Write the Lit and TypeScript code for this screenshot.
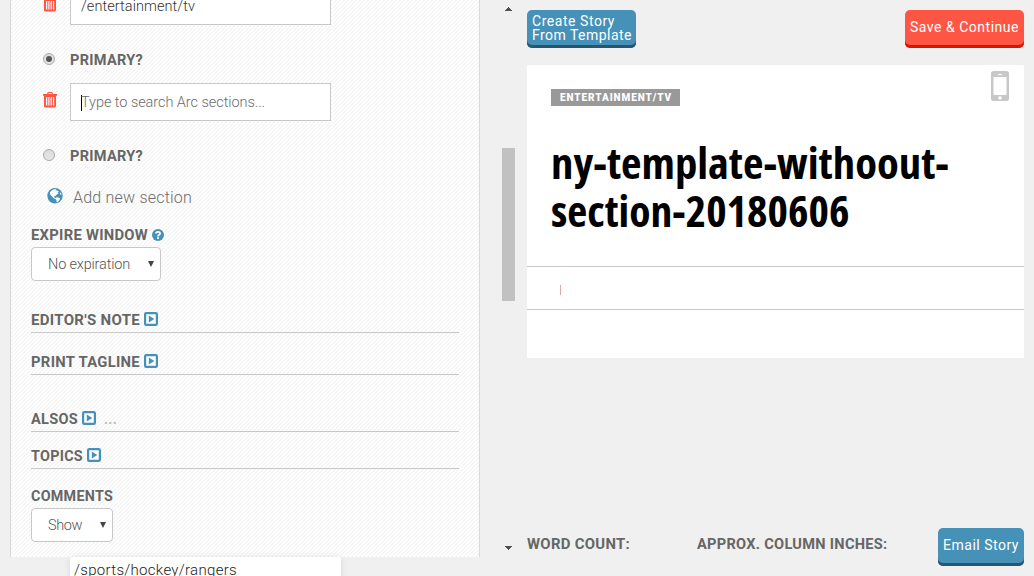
import { LitElement, html, css } from "lit";
import { customElement, property } from "lit/decorators.js";

/** Single line of text set to an exact measure, by tracking or by horizontal scaling. */
@customElement("fit-text")
class FitText extends LitElement {
  @property({ type: Number }) width = 0;
  @property({ type: String }) text = "";
  @property({ type: Boolean }) squeeze = false;
  static styles = css`
    :host { display: inline-block; white-space: nowrap; flex: none; }
    .t { display: inline-block; transform-origin: 0 50%; }
  `;
  updated() {
    const t = this.renderRoot.querySelector(".t") as HTMLElement;
    this.style.width = this.width + "px";
    if (this.squeeze) {
      t.style.transform = `scaleX(${this.width / t.getBoundingClientRect().width})`;
    } else {
      t.style.letterSpacing = "0px";
      t.style.letterSpacing = (this.width - t.getBoundingClientRect().width) / this.text.length + "px";
    }
  }
  render() { return html`<span class="t">${this.text}</span>`; }
}

const trash = html`<svg class="trash" width="14" height="16" viewBox="0 0 14 16">
  <path fill="#ff5544" fill-rule="evenodd" d="M4.800 0h4.400l.8 2H14v1.700h-1V14a1.600 1.600 0 0 1-1.600 1.600H2.600A1.600 1.600 0 0 1 1 14V3.700H0V2h4zM5.500 1L5.100 2h3.800l-.4-1zM3 5v8.500h1.300V5zM5.300 5v8.500h1.200V5zM7.600 5v8.500h1.200V5zM9.900 5v8.500h1.200V5z"/></svg>`;
const globe = html`<svg class="globe" width="16" height="16" viewBox="0 0 16 16">
  <circle cx="8" cy="7.700" r="7.700" fill="#4591b8"/>
  <path fill="#fff" d="M2.900 4.300L4.900 2.200 7.800 1.100l2 .9-.9 1 1.900-.4 1.100 1.100-1.200.9.900 1-1.500.7-1.300 1.500-1.700.5.300 1.200 1.600.7-.5.700-2.200-.9-1.600-2L3 6.200zM8.800 9.600l2.200-.3 2.100 1.200-.7 1.800-2.100 2.100-.8-.2.100-1.900-1-1.100zM12.700 5l1.200-.4.800 1.800-1.100.4z"/></svg>`;
const help = html`<svg class="help" width="12" height="12" viewBox="0 0 12 12">
  <circle cx="6" cy="6" r="6" fill="#4591b8"/>
  <path fill="none" stroke="#fff" stroke-width="1.700" d="M3.900 4.600C3.900 2.300 8.100 2.300 8.100 4.500 8.100 5.800 6 5.700 6 7.400"/><path fill="#fff" d="M5.100 8.300h1.800V10H5.100z"/></svg>`;
const play = html`<svg class="play" width="14" height="14" viewBox="0 0 14 14">
  <rect x="1.100" y="1.100" width="11.800" height="11.800" rx="1.200" fill="#fff" stroke="#4591b8" stroke-width="2.200"/>
  <path fill="#4591b8" d="M4.800 3.500L10.300 7l-5.500 3.500z"/></svg>`;
const phone = html`<svg class="phone" width="18" height="30" viewBox="0 0 18 30">
  <rect width="18" height="30" rx="2.500" fill="#c8c8c8"/><rect x="2.500" y="6" width="13" height="18" fill="#fff"/>
  <rect x="7" y="3" width="4" height="1" fill="#fff"/><circle cx="9" cy="27" r="1.800" fill="#fff"/></svg>`;
const arrow = html`<svg class="arrow" width="6" height="6" viewBox="0 0 6 6"><path fill="#444" d="M0 0h6L3 6z"/></svg>`;

@customElement("app-root")
class AppRoot extends LitElement {
  static styles = css`
    * { box-sizing: border-box; }
    :host { display: flex; position: relative; width: 1034px; height: 576px; overflow: hidden; background: #f0f0f0;
      font-family: Roboto, "Liberation Sans", sans-serif; font-size: 14px; color: #666; }
    svg { display: block; flex: none; }
    .panel { width: 470px; height: 557px; margin-left: 10px; padding: 0 20px; overflow: hidden;
      border: solid #d8d8d8; border-width: 0 1px; flex: none;
      background: linear-gradient(135deg, #f6f6f6 25%, #fff 25% 50%, #f6f6f6 50% 75%, #fff 75%) 0 0 / 4px 4px; }
    .row { display: flex; align-items: center; }
    .entry { padding-left: 12px; height: 38px; }
    .entry.first { height: 25px; align-items: flex-end; }
    .field { width: 261px; height: 38px; margin-left: 13px; padding-left: 10px; border: 1px solid #c8c8c8; background: #fff;
      display: flex; align-items: center; flex: none; font-weight: 300; color: #333; font-size: 14.500px; }
    .first .trash { margin-bottom: 13px; }
    .field.hint { color: #6c6c6c; padding: 1px 0 0 10px; }
    .caret { width: 1px; height: 16px; background: #000; margin-right: -1px; }
    .trash { margin-top: -4px; }
    .primary { height: 20px; padding-left: 12px; }
    .primary .label { padding-top: 1px; }
    .radio { width: 12px; height: 12px; border-radius: 50%; border: 1px solid #aaa; background: linear-gradient(#ddd, #e6e6e6);
      margin-right: 15px; display: grid; place-items: center; }
    .dot { width: 6px; height: 6px; border-radius: 50%; background: #555; }
    .label { font-weight: 700; font-size: 15px; line-height: 20px; letter-spacing: .3px; }
    .gap24 { margin-top: 24px; }
    .add { height: 20px; margin-top: 21px; padding-left: 16px; font-weight: 300; font-size: 16px; color: #6c6c6c; gap: 10px; }
    .add fit-text { padding-top: 2px; }
    .head { height: 20px; gap: 4px; }
    .select { height: 34px; border: 1px solid #c8c8c8; border-radius: 4px; background: #fff; justify-content: space-between;
      padding: 0 6px 0 16px; font-weight: 300; font-size: 14.500px; color: #555; }
    .rule { border-bottom: 1px solid #c8c8c8; height: 23px; align-items: flex-start; gap: 4px; }
    .rule .play { margin-top: 2px; }
    .more { color: #bbb; font-weight: 700; margin-left: 4px; line-height: 20px; }
    .s2 { height: 2px; } .s14 { height: 14px; } .s17 { height: 17px; } .s19 { height: 19px; } .s29 { height: 29px; } .s34 { height: 34px; }
    .menu { position: absolute; left: 70px; top: 557px; width: 271px; height: 40px; background: #fff; padding: 2px 4px;
      border-radius: 2px; box-shadow: 0 0 6px rgba(0,0,0,.1); color: #222; font-weight: 300; font-size: 15px; line-height: 22px; }
    .gutter { width: 13px; margin-left: 22px; display: flex; flex-direction: column; align-items: center; flex: none; }
    .up { margin-top: 7px; }
    .thumb { width: 13px; height: 153px; background: #c1c1c1; margin-top: 137px; }
    .down { margin-top: 245px; }
    .main { width: 497px; margin-left: 12px; padding-top: 10px; display: flex; flex-direction: column; flex: none; }
    .bar { display: flex; justify-content: space-between; }
    .btn { height: 38px; border-radius: 5px; background: #4591b8; box-shadow: inset 0 -3px #28566f; color: #fff;
      padding: 0 5px 3px; display: flex; flex-direction: column; justify-content: center; line-height: 14px; font-size: 14px; flex: none; }
    .btn.save { background: #ff5544; box-shadow: inset 0 -3px #dc1500; }
    .btn.single { padding-bottom: 5px; }
    .btn.create { width: 109px; } .btn.save { width: 119px; } .btn.email { width: 86px; }
    .wide { width: 130px; } .narrow { width: 82px; }
    .story { margin-top: 17px; height: 293px; background: #fff; }
    .top { height: 201px; padding: 6px 15px 0 24px; display: flex; justify-content: space-between; align-items: flex-start; }
    .copy { display: flex; flex-direction: column; align-items: flex-start; }
    .badge { margin-top: 18px; height: 17px; width: 129px; padding-left: 9px; background: #999; color: #fff; font-weight: 900;
      font-size: 10px; line-height: 17px; }
    .title { margin-top: 33px; color: #000; font: 700 43px/48px "Open Sans", sans-serif; font-stretch: 75%; display: flex; flex-direction: column; }
    .strip { height: 44px; border: solid #c8c8c8; border-width: 1px 0; padding: 18px 0 0 33px; }
    .mark { width: 1px; height: 10px; background: #dba8a8; }
    .foot { margin-top: 170px; display: flex; }
    .count { margin: 6px 0 0; width: 170px; }
    .inches { margin: 6px 0 0; width: 241px; }
  `;
  section(name: string, w: number, extra: unknown = "") {
    return html`<div class="row rule"><fit-text squeeze class="label" .width=${w} .text=${name}></fit-text>${play}${extra}</div>`;
  }
  render() {
    return html`
      <div class="panel">
        <div class="row entry first">${trash}<div class="field"><fit-text .width=${114} .text=${"/entertainment/tv"}></fit-text></div></div>
        <div class="row primary gap24"><div class="radio"><div class="dot"></div></div><fit-text squeeze class="label" .width=${73} .text=${"PRIMARY?"}></fit-text></div>
        <div class="s14"></div>
        <div class="row entry">${trash}<div class="field hint"><div class="caret"></div><fit-text .width=${184} .text=${"Type to search Arc sections..."}></fit-text></div></div>
        <div class="row primary gap24"><div class="radio"></div><fit-text squeeze class="label" .width=${73} .text=${"PRIMARY?"}></fit-text></div>
        <div class="row add">${globe}<fit-text .width=${119} .text=${"Add new section"}></fit-text></div>
        <div class="s19"></div>
        <div class="row head"><fit-text squeeze class="label" .width=${117} .text=${"EXPIRE WINDOW"}></fit-text>${help}</div>
        <div class="s2"></div>
        <div class="row select wide"><fit-text .width=${82} .text=${"No expiration"}></fit-text>${arrow}</div>
        <div class="s29"></div>
        ${this.section("EDITOR'S NOTE", 109)}
        <div class="s19"></div>
        ${this.section("PRINT TAGLINE", 109)}
        <div class="s34"></div>
        ${this.section("ALSOS", 47, html`<div class="more"><fit-text .width=${13} .text=${"..."}></fit-text></div>`)}
        <div class="s14"></div>
        ${this.section("TOPICS", 52)}
        <div class="s17"></div>
        <div class="row head"><fit-text squeeze class="label" .width=${82} .text=${"COMMENTS"}></fit-text></div>
        <div class="s2"></div>
        <div class="row select narrow"><fit-text .width=${34} .text=${"Show"}></fit-text>${arrow}</div>
      </div>
      <div class="gutter">
        <svg class="up" width="7" height="4" viewBox="0 0 7 4"><path fill="#505050" d="M3 0h1v1h1v1h1v1h1v1H0V3h1V2h1V1h1z"/></svg>
        <div class="thumb"></div>
        <svg class="down" width="7" height="4" viewBox="0 0 7 4"><path fill="#505050" d="M0 0h7v1H6v1H5v1H4v1H3V3H2V2H1V1H0z"/></svg>
      </div>
      <div class="main">
        <div class="bar">
          <div class="btn create"><fit-text .width=${83} .text=${"Create Story"}></fit-text><fit-text .width=${100} .text=${"From Template"}></fit-text></div>
          <div class="btn single save"><fit-text .width=${109} .text=${"Save & Continue"}></fit-text></div>
        </div>
        <div class="story">
          <div class="top">
            <div class="copy">
              <div class="badge"><fit-text .width=${112} .text=${"ENTERTAINMENT/TV"}></fit-text></div>
              <div class="title"><fit-text squeeze .width=${398} .text=${"ny-template-withoout-"}></fit-text><fit-text squeeze .width=${298.5} .text=${"section-20180606"}></fit-text></div>
            </div>
            ${phone}
          </div>
          <div class="strip"><div class="mark"></div></div>
        </div>
        <div class="foot">
          <div class="count"><fit-text squeeze class="label" .width=${103} .text=${"WORD COUNT:"}></fit-text></div>
          <div class="inches"><fit-text squeeze class="label" .width=${190.5} .text=${"APPROX. COLUMN INCHES:"}></fit-text></div>
          <div class="btn single email"><fit-text .width=${76} .text=${"Email Story"}></fit-text></div>
        </div>
      </div>
      <div class="menu"><fit-text .width=${163} .text=${"/sports/hockey/rangers"}></fit-text></div>
    `;
  }
}
